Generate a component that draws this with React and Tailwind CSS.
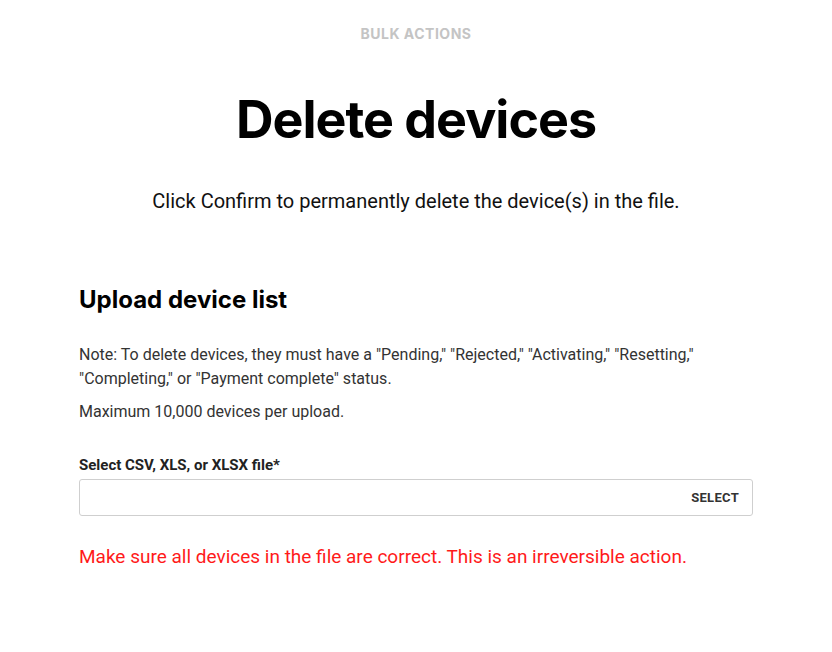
import React from 'react';

const body = { fontFamily: 'Roboto, "Liberation Sans", sans-serif' };
const sharp = { fontFamily: 'Inter, "Liberation Sans", sans-serif' };

const App = () => {
  return (
    <div className="min-h-[652px] bg-white" style={body}>
      <div className="mx-auto w-[674px] pt-[26px]">
        {/* Page header */}
        <div className="text-center">
          <p className="text-[14px] font-bold tracking-[0.5px] text-[#c4c4c4] leading-[16px]" style={sharp}>
            BULK ACTIONS
          </p>
          <h1 className="mt-[48px] text-[52px] font-bold leading-[60px] tracking-[-1px] text-black" style={sharp}>
            Delete devices
          </h1>
          <p className="mt-[39px] text-[20px] leading-[24px] text-[#111]">
            Click Confirm to permanently delete the device(s) in the file.
          </p>
        </div>

        {/* Upload section */}
        <div className="mt-[73px]">
          <h2 className="text-[24px] font-bold leading-[28px] text-black" style={sharp}>
            Upload device list
          </h2>
          <p className="mt-[29px] text-[16px] leading-[24px] text-[#333]">
            Note: To delete devices, they must have a "Pending," "Rejected," "Activating," "Resetting," "Completing," or "Payment complete" status.
          </p>
          <p className="mt-[9px] text-[16px] leading-[24px] text-[#333]">
            Maximum 10,000 devices per upload.
          </p>

          <label className="mt-[31px] block text-[15px] font-bold leading-[20px] text-[#222]">
            Select CSV, XLS, or XLSX file*
          </label>
          <div className="mt-[4px] flex h-[37px] items-center justify-end rounded-[3px] border border-[#cfcfcf] px-[13px]">
            <span className="text-[13px] font-bold tracking-[0.3px] text-[#333]">SELECT</span>
          </div>

          <p className="mt-[29px] text-[19px] leading-[24px] text-[#ff1a1a]">
            Make sure all devices in the file are correct. This is an irreversible action.
          </p>
        </div>
      </div>
    </div>
  );
};

export default App;
